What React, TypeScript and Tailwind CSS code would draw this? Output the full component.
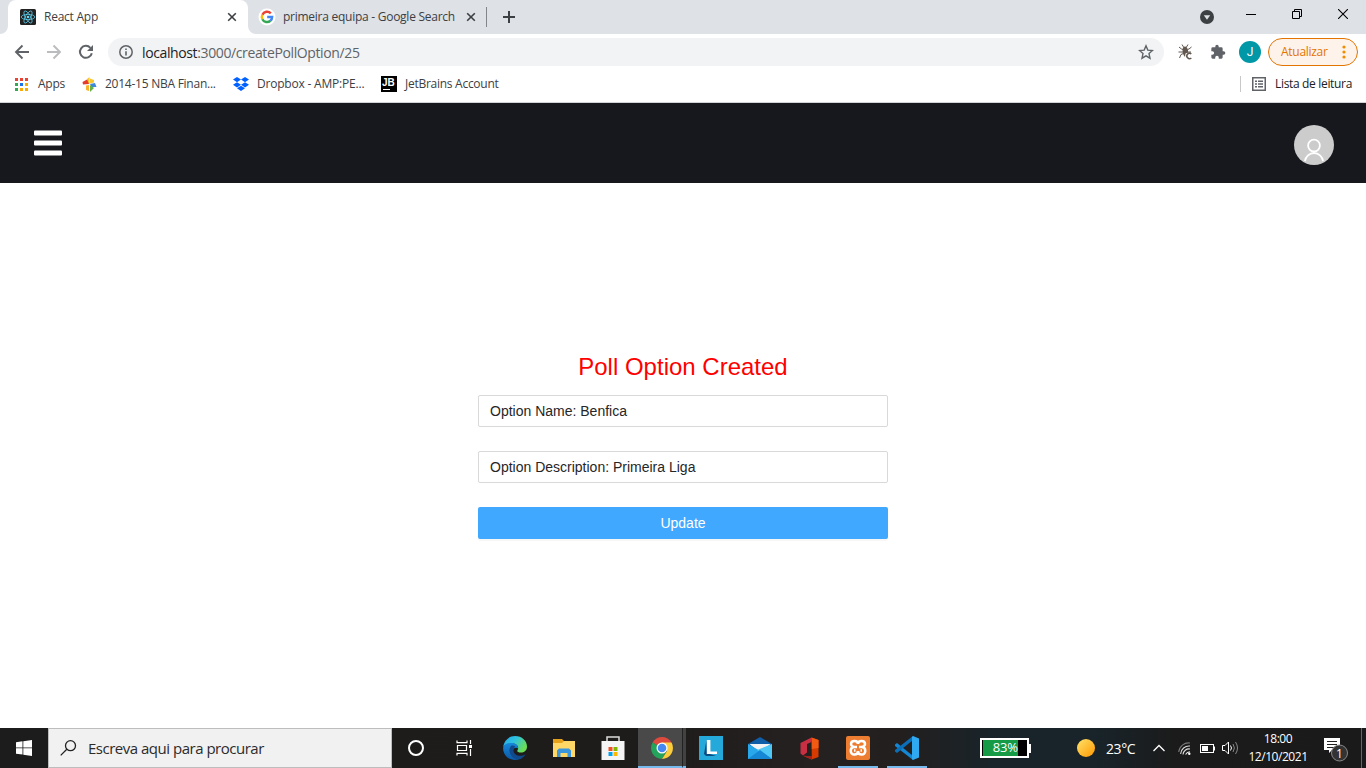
import type { ReactNode } from "react";

const ui = "font-['Open_Sans','Noto_Sans',sans-serif]";

function Cell({ className, children }: { className: string; children?: ReactNode }) {
  return <div className={`flex h-full shrink-0 items-center justify-center ${className}`}>{children}</div>;
}

function Label({ className, children }: { className: string; children?: ReactNode }) {
  return <div className={`shrink-0 whitespace-nowrap ${className}`}>{children}</div>;
}

function Close() {
  return (
    <svg className="block" width="10" height="10" viewBox="0 0 10 10" stroke="#3c4043" strokeWidth="1.6" fill="none">
      <path d="M1.2 1.2l7.600 7.600M8.800 1.200l-7.600 7.600" />
    </svg>
  );
}

function GoogleG() {
  return (
    <svg className="block" width="18" height="18" viewBox="0 0 18 18" fill="none" strokeWidth="2.5">
      <circle cx="9" cy="9" r="8.5" fill="#fff" />
      <path d="M12.8 5.4A5.1 5.1 0 0 0 4.4 6.8" stroke="#ea4335" />
      <path d="M4.4 6.7a5.1 5.1 0 0 0 0 4.6" stroke="#fbbc05" />
      <path d="M4.4 11.2a5.1 5.1 0 0 0 8 1.6" stroke="#34a853" />
      <path d="M12.3 12.9A5.1 5.1 0 0 0 14.1 9H9.2" stroke="#4285f4" />
    </svg>
  );
}

function ReactLogo() {
  return (
    <svg className="block" width="16" height="16" viewBox="0 0 16 16" fill="none" stroke="#61dafb" strokeWidth=".7">
      <rect width="16" height="16" rx="1.5" fill="#222" stroke="none" />
      <ellipse cx="8" cy="8" rx="6.8" ry="2.6" />
      <ellipse cx="8" cy="8" rx="6.8" ry="2.6" transform="rotate(60 8 8)" />
      <ellipse cx="8" cy="8" rx="6.8" ry="2.6" transform="rotate(120 8 8)" />
      <circle cx="8" cy="8" r="1.3" fill="#61dafb" stroke="none" />
    </svg>
  );
}

function TabStrip() {
  return (
    <div className="flex h-[34px] items-center bg-[#dee1e6] text-[12px] text-[#3c4043]">
      <svg className="block h-[34px] w-2 shrink-0" viewBox="0 0 8 34"><path d="M8 34V26a8 8 0 0 1-8 8z" fill="#fff" /></svg>
      <div className="flex h-full w-60 shrink-0 items-center rounded-t-lg bg-white pl-3">
        <ReactLogo />
        <Label className="ml-2 w-[181px] tracking-[-0.25px]">React App</Label>
        <Cell className="ml-[1px] w-3"><Close /></Cell>
      </div>
      <svg className="block h-[34px] w-2 shrink-0" viewBox="0 0 8 34"><path d="M0 34V26a8 8 0 0 0 8 8z" fill="#fff" /></svg>
      <Cell className="ml-[2px] w-[18px]"><GoogleG /></Cell>
      <Label className="ml-[7px] w-[182px] tracking-[-0.26px]">primeira equipa - Google Search</Label>
      <Cell className="w-3"><Close /></Cell>
      <div className="ml-[9px] h-5 w-px bg-[#80868b]" />
      <Cell className="ml-4 w-3">
        <svg className="block" width="12" height="12" viewBox="0 0 12 12" stroke="#3c4043" strokeWidth="2"><path d="M6 0v12M0 6h12" /></svg>
      </Cell>
      <div className="flex-1" />
      <Cell className="mr-8 w-[14px]">
        <svg className="block" width="14" height="14" viewBox="0 0 14 14"><circle cx="7" cy="7" r="7" fill="#3c4043" /><path d="M3.8 5.2h6.4L7 9.8z" fill="#dee1e6" /></svg>
      </Cell>
      <svg className="mb-[5px] mr-9 block" width="10" height="11" viewBox="0 0 10 11"><path d="M0 5.5h10" stroke="#000" /></svg>
      <svg className="mb-[6px] mr-9 block" width="10" height="10" viewBox="0 0 10 10" fill="none" stroke="#000"><path d="M.5 2.5h7v7h-7zM2.5 2.5v-2h7v7h-2" /></svg>
      <svg className="mb-[6px] mr-[18px] block" width="10" height="10" viewBox="0 0 10 10" stroke="#000" strokeWidth="1.1"><path d="M0 0l10 10M10 0L0 10" /></svg>
    </div>
  );
}

function Toolbar() {
  return (
    <div className="flex h-9 items-center bg-white text-[#5f6368]">
      <svg className="ml-[14px] block" width="16" height="16" viewBox="0 0 16 16" fill="none" stroke="#5f6368" strokeWidth="1.9"><path d="M15 8H2.5M8.5 1.5L2 8l6.5 6.5" /></svg>
      <svg className="ml-4 block" width="16" height="16" viewBox="0 0 16 16" fill="none" stroke="#babcbe" strokeWidth="1.9"><path d="M1 8h12.5M7.5 1.5L14 8l-6.5 6.5" /></svg>
      <svg className="ml-4 block" width="16" height="16" viewBox="0 0 16 16" fill="none" stroke="#5f6368" strokeWidth="2"><path d="M13.8 9.2A6 6 0 1 1 12.4 3.8" /><path d="M15 1v6H9z" fill="#5f6368" stroke="none" /></svg>
      <div className="ml-[14px] flex h-7 w-[1056px] items-center rounded-full bg-[#f1f3f4] pl-[11px]">
        <svg className="block" width="14" height="14" viewBox="0 0 14 14" fill="none" stroke="#5f6368" strokeWidth="1.5"><circle cx="7" cy="7" r="6.2" /><path d="M7 6.2v4.2M7 3.5v1.5" strokeWidth="1.6" /></svg>
        <Label className="ml-[9px] w-[996px] text-[14px] tracking-[-0.38px]"><span className="text-[#202124]">localhost</span>:3000/createPollOption/25</Label>
        <svg className="block" width="16" height="16" viewBox="0 0 16 16" fill="none" stroke="#5f6368" strokeWidth="1.4"><path d="M8 1.8l1.8 4.3 4.7.4L11 9.6l1 4.6-4-2.4-4 2.4 1-4.6-3.5-3.1 4.7-.4z" /></svg>
      </div>
      <svg className="ml-[14px] block" width="16" height="16" viewBox="0 0 16 16" fill="none" stroke="#62584f" strokeWidth="1">
        <path d="M4 .5l1.500 2.500M10 .5L8.500 3M1 3l2.500 2L5 5.500M13.500 3L11 5l-1.500.5M.5 8H5M1.500 14l1.500-3.500L5.500 9.500M9 8h4" />
        <path d="M5 3.500q2-2 4 0L10 6v2.500L7.500 9.500 7 13Q5.500 11.500 4.800 9L4.500 6z" fill="#62584f" stroke="none" />
        <path d="M13.300 9.800a2.700 2.700 0 1 0 0 4.200" strokeWidth="1.600" />
      </svg>
      <svg className="ml-4 block" width="16" height="16" viewBox="0 0 24 24" fill="#5f6368"><path d="M20.5 11H19V7a2 2 0 0 0-2-2h-4V3.500a2.500 2.500 0 0 0-5 0V5H4a2 2 0 0 0-2 2v3.800h1.500a2.700 2.700 0 0 1 0 5.400H2V20a2 2 0 0 0 2 2h3.800v-1.500a2.700 2.700 0 0 1 5.400 0V22H17a2 2 0 0 0 2-2v-4h1.500a2.500 2.500 0 0 0 0-5z" /></svg>
      <div className="ml-[13px] flex h-[22px] w-[22px] items-center justify-center rounded-full bg-[#0097a7] font-['Roboto',sans-serif] text-[12px] text-white">J</div>
      <div className="ml-[7px] flex h-7 w-[90px] items-center rounded-full border border-[#e37400] bg-[#fdf3ea] pl-3 text-[12px] text-[#e37400]">
        <Label className="w-[61px] tracking-[-0.28px]">Atualizar</Label>
        <svg className="block" width="4" height="14" viewBox="0 0 4 14" fill="#f08c00"><circle cx="2" cy="2" r="1.600" /><circle cx="2" cy="7" r="1.600" /><circle cx="2" cy="12" r="1.600" /></svg>
      </div>
    </div>
  );
}

function Bookmarks() {
  return (
    <div className="flex h-[33px] items-center border-b border-[#d0d2d5] bg-white pb-1 text-[12px] text-[#3c4043]">
      <svg className="ml-[15px] block" width="13" height="13" viewBox="0 0 13 13">
        <path d="M0 0h3v3H0zM5 0h3v3H5zM10 0h3v3h-3z" fill="#ea4335" />
        <path d="M0 5h3v3H0zM0 10h3v3H0z" fill="#34a853" />
        <path d="M5 5h3v3H5z" fill="#1a73e8" />
        <path d="M10 5h3v3h-3zM5 10h3v3H5zM10 10h3v3h-3z" fill="#f9ab00" />
      </svg>
      <Label className="ml-[10px] w-11 tracking-[-0.25px]">Apps</Label>
      <svg className="block" width="15" height="15" viewBox="0 0 15 15">
        <path d="M7.500 7V0l-2.500 2v4.500z" fill="#f9c62d" /><path d="M8 6.500V1.500l4 1.500v2.500z" fill="#f9c62d" /><path d="M7 7L1 7.500 .5 5 5 2.500z" fill="#e53b2c" /><path d="M8 7l5-1 1.500 4-5 0z" fill="#3f87d8" /><path d="M7 8v6l-3-1V8.500z" fill="#f7b32b" /><path d="M8 8l4 3-4 4z" fill="#62b146" />
      </svg>
      <Label className="ml-2 w-32 tracking-[-0.25px]">2014-15 NBA Finan...</Label>
      <svg className="block" width="16" height="14" viewBox="0 0 16 14" fill="#0061ff"><path d="M4 0l4 2.600-4 2.600-4-2.600zM12 0l4 2.600-4 2.600-4-2.600zM4 5.200l4 2.600-4 2.600-4-2.600zM12 5.200l4 2.600-4 2.600-4-2.600zM8 8.700l4 2.600-4 2.600-4-2.600z" /></svg>
      <Label className="ml-2 w-[124px] tracking-[-0.2px]">Dropbox - AMP:PE...</Label>
      <div className="flex h-4 w-4 shrink-0 flex-col bg-black pl-[1px] pt-[2px] font-['Liberation_Sans',sans-serif] text-[10px] font-bold leading-[9px] text-white">
        JB<span className="ml-[1px] mt-[2px] block h-px w-[7px] bg-white" />
      </div>
      <Label className="ml-2 tracking-[-0.27px]">JetBrains Account</Label>
      <div className="flex-1" />
      <div className="h-4 w-px bg-[#c6c8ca]" />
      <svg className="ml-[11px] block" width="14" height="14" viewBox="0 0 14 14" fill="none" stroke="#5f6368" strokeWidth="1.500"><rect x=".75" y=".75" width="12.500" height="12.500" /><path d="M3 4.200h2M6 4.200h5M3 7h2M6 7h5M3 9.800h2M6 9.800h5" /></svg>
      <Label className="ml-[9px] w-[91px] tracking-[-0.33px] text-[#202124]">Lista de leitura</Label>
    </div>
  );
}

function Page() {
  return (
    <>
      <header className="flex h-20 items-center justify-between bg-[#17181d] pl-[34px] pr-8">
        <svg className="block" width="28" height="26" viewBox="0 0 28 26" fill="#fff"><rect y="0.5" width="28" height="5" rx="1" /><rect y="10.500" width="28" height="5" rx="1" /><rect y="20.500" width="28" height="5" rx="1" /></svg>
        <svg className="mt-1 block" width="40" height="40" viewBox="0 0 40 40" fill="none" stroke="#fff" strokeWidth="1.800"><circle cx="20" cy="20" r="20" fill="#ccc" stroke="none" /><circle cx="20" cy="20.600" r="5.900" /><path d="M10.900 36.200a9.200 9.600 0 0 1 18.200 0" /></svg>
      </header>
      <main className="flex flex-1 justify-center bg-white pt-[165px] font-['Liberation_Sans',sans-serif]">
        <div className="flex w-[410px] flex-col">
          <h1 className="mb-[9px] text-center text-[24px] leading-[38px] text-[#ff0000]">Poll Option Created</h1>
          <div className="mb-6 flex h-8 items-center rounded-[2px] border border-[#d9d9d9] px-[11px] text-[14px] text-[#262626]">Option Name: Benfica</div>
          <div className="mb-6 flex h-8 items-center rounded-[2px] border border-[#d9d9d9] px-[11px] text-[14px] text-[#262626]">Option Description: Primeira Liga</div>
          <button className="h-8 rounded-[2px] bg-[#40a9ff] text-[14px] text-white shadow-[0_2px_0_rgba(0,0,0,0.03)]">Update</button>
        </div>
      </main>
    </>
  );
}

function EdgeIcon() {
  return (
    <svg className="block" width="24" height="24" viewBox="0 0 24 24">
      <defs>
        <linearGradient id="edgeTop" x1="0" y1="0" x2="1" y2=".5"><stop offset="0" stopColor="#24a5e8" /><stop offset=".5" stopColor="#2fc3df" /><stop offset="1" stopColor="#6bdd55" /></linearGradient>
        <linearGradient id="edgeLow" x1="0" y1="0" x2="0" y2="1"><stop offset="0" stopColor="#1688dc" /><stop offset="1" stopColor="#0c59a4" /></linearGradient>
      </defs>
      <path d="M.2 11C1 4.500 6 0 12 0c7 0 12 5 12 10.500 0 4-3 6-6 6-3 0-4.500-1-3.500-2.300C16.500 11 14 7.500 9 7.500 4 7.500 1 9.500.2 11z" fill="url(#edgeTop)" />
      <path d="M.1 12.500C0 9 4 7 8.500 7c4.500 0 7 3 6.500 5.500-2-2-6 0-5.500 4 .5 4.500 5.500 6.500 10 5C17.500 23 15 24 12 24 5 24 .3 18.500.1 12.500z" fill="url(#edgeLow)" />
      <path d="M8.500 9.500c-4 3.500-2 12 5.500 14 4 .2 7-2.500 8.500-5.200-5 3-12 1.500-12-4 0-2 1-3 2-3.500-1-1-2.500-1.500-4-1.300z" fill="#104a8c" />
    </svg>
  );
}

function ChromeIcon() {
  return (
    <svg className="block" width="22" height="22" viewBox="0 0 22 22">
      <path d="M11 11L1.500 5.500A11 11 0 0 1 20.500 5.500z" fill="#df4a3f" />
      <path d="M11 11L1.500 5.500A11 11 0 0 0 11 22l4.500-8z" fill="#24a35a" />
      <path d="M11 5.500h9.500A11 11 0 0 1 11 22l5-8z" fill="#fbcd3b" />
      <circle cx="11" cy="11" r="5.500" fill="#fff" /><circle cx="11" cy="11" r="4.300" fill="#4688f1" />
    </svg>
  );
}

function Tray() {
  return (
    <>
      <div className="ml-[53px] flex items-center">
        <div className="flex h-5 w-[49px] items-stretch border-2 border-white bg-black text-[13px] text-white">
          <div className="ml-px flex w-[35px] items-center justify-end whitespace-nowrap bg-[#159a46] tracking-[-0.1px]">83%</div>
        </div>
        <div className="h-[9px] w-[2px] bg-white" />
      </div>
      <svg className="ml-[46px] block" width="18" height="18" viewBox="0 0 18 18"><defs><linearGradient id="sun" x1="0" y1="0" x2="1" y2="1"><stop stopColor="#ffe36a" /><stop offset="1" stopColor="#ff9800" /></linearGradient></defs><circle cx="9" cy="9" r="9" fill="url(#sun)" /></svg>
      <Label className="ml-[11px] w-[47px] text-[14px] tracking-[-0.4px]">23°C</Label>
      <svg className="block" width="12" height="8" viewBox="0 0 12 8" fill="none" stroke="#fff" strokeWidth="1.300"><path d="M.5 7L6 1.500 11.500 7" /></svg>
      <svg className="ml-[13px] mt-px block" width="13" height="13" viewBox="0 0 13 13" fill="none" strokeWidth="1.100"><path d="M.7 10A10 10 0 0 1 12 1" stroke="#777" /><path d="M2.600 12A8.500 8.500 0 0 1 12 4M5 12.500A6 6 0 0 1 12 7M7.600 12.500Q9 10 12 9.800" stroke="#ddd" /><circle cx="11.300" cy="11.700" r="1.200" fill="#fff" /></svg>
      <svg className="ml-[9px] block" width="16" height="9" viewBox="0 0 16 9" fill="none" stroke="#fff"><rect x=".5" y=".5" width="13" height="8" /><path d="M2 2h6v5H2z" fill="#fff" stroke="none" /><path d="M14.500 2.500v4" /></svg>
      <svg className="ml-[6px] block" width="17" height="14" viewBox="0 0 17 14" fill="none" stroke="#fff"><path d="M.5 4.500H3L6.500 1v12L3 9.500H.5zM8.500 4.500q2 2.500 0 5" /><path d="M11 3q2.800 4 0 8M13.500 1q4 6 0 12" stroke="#888" /></svg>
      <div className="ml-[6px] flex w-[66px] flex-col items-center whitespace-nowrap text-[12px] leading-[18px] tracking-[-0.45px]"><span>18:00</span><span>12/10/2021</span></div>
      <svg className="ml-[13px] mt-1 block" width="26" height="26" viewBox="0 0 26 26">
        <path d="M0 1h16v12H8l-3 3v-3H0z" fill="#fff" /><path d="M3 4.500h10M3 7.500h10M3 10.500h7" stroke="#222" />
        <circle cx="15.500" cy="16" r="8" fill="#333" stroke="#888" /><text x="15.500" y="20.500" textAnchor="middle" fontSize="12" fontFamily="Open Sans" fill="#fff">1</text>
      </svg>
      <div className="ml-[11px] h-full w-px bg-[#666]" />
    </>
  );
}

function Taskbar() {
  return (
    <footer className="flex h-10 items-center bg-[linear-gradient(90deg,#1c1c1c_0,#1e1c1b_48%,#252120_60%,#231f1f_66%,#18242a_73%,#18242a_80%,#1b1b1b_86%,#1a1a1a_100%)] text-white">
      <Cell className="w-12"><svg className="block" width="16" height="16" viewBox="0 0 16 16" fill="#fff"><path d="M0 2.200L6.500 1.300V7.500H0zM7.300 1.200L16 0v7.500H7.300zM0 8.300h6.500v6.200L0 13.700zM7.300 8.300H16V16l-8.700-1.300z" /></svg></Cell>
      <div className="flex h-full w-[344px] shrink-0 items-center border border-[#bdbdbd] bg-[#f1f1f1] pl-[11px] text-[#2b2b2b]">
        <svg className="block" width="17" height="16" viewBox="0 0 17 16" fill="none" stroke="#222" strokeWidth="1.300"><circle cx="10.500" cy="5.700" r="5" /><path d="M6.800 9.300L.7 15.400" /></svg>
        <Label className="ml-[11px] text-[15px] tracking-[-0.49px]">Escreva aqui para procurar</Label>
      </div>
      <Cell className="w-12"><div className="h-4 w-4 rounded-full border-2 border-white" /></Cell>
      <Cell className="w-12"><svg className="block" width="17" height="16" viewBox="0 0 17 16" fill="none" stroke="#fff" strokeWidth="1.200"><path d="M1 .5v2.200h10V.5M1 15.500v-2.200h10v2.200M1.500 5.500h9v5h-9zM14.500 0v4M14.500 9v7" /><path d="M13 5h3v3h-3z" fill="#fff" stroke="none" /></svg></Cell>
      <Cell className="ml-[2px] w-[50px]"><EdgeIcon /></Cell>
      <Cell className="w-12"><svg className="block" width="22" height="19" viewBox="0 0 22 19"><path d="M0 0h9l2 2H22v16H0z" fill="#e5a01c" /><path d="M0 4h9l2-2h11v16H0z" fill="#ffd766" /><path d="M4 18v-6.500l2-2h10l2 2V18h-3.500v-4h-7v4z" fill="#3a96dd" /></svg></Cell>
      <Cell className="w-[50px]"><svg className="block" width="24" height="24" viewBox="0 0 24 24"><path d="M6 7V1h12v6" fill="none" stroke="#ddd" strokeWidth="1.500" /><path d="M.5 5h23v19H.5z" fill="#f5f5f5" /><path d="M7.500 11h4v4h-4z" fill="#f25022" /><path d="M12.500 11h4v4h-4z" fill="#7fba00" /><path d="M7.500 16h4v4h-4z" fill="#00a4ef" /><path d="M12.500 16h4v4h-4z" fill="#ffb900" /></svg></Cell>
      <Cell className="w-11 border-b-2 border-[#76b9ed] bg-[#494949] pl-1 pt-[2px]"><ChromeIcon /></Cell>
      <div className="h-full w-1 shrink-0 border-b-2 border-l border-b-[#76b9ed] border-l-[#222] bg-[#424242]" />
      <Cell className="w-[50px]"><svg className="block" width="24" height="24" viewBox="0 0 24 24"><path d="M0 0h24v24H0z" fill="#25a9da" /><path d="M7.500 4l-2.500 14 2 2H17l-9-3z" fill="#0c4a82" /><path d="M7.800 4h3.600v11.500H18V18H7.800z" fill="#fff" /></svg></Cell>
      <Cell className="w-12"><svg className="block" width="24" height="22" viewBox="0 0 24 22"><path d="M0 7L12 0l12 7v3H0z" fill="#105da8" /><path d="M1.500 7h21L12 16z" fill="#f3f3f3" /><path d="M0 7l14 8 10 7H0z" fill="#28a8ea" /><path d="M24 7v15L9 13z" fill="#50c8f5" /><path d="M0 22l12-9 12 9z" fill="#1687d4" /></svg></Cell>
      <Cell className="w-[50px]"><svg className="block" width="19" height="23" viewBox="0 0 19 23"><path d="M.5 6L11.500.5V5L7 7v8.500L3 18.500l-2.500-2z" fill="#c92f43" /><path d="M11.500.5L18.500 3v17l-7 2.500L3.500 19l8.300.5z" fill="#d83b01" /><path d="M11.500.5L18.500 3v8l-6.700 1V5z" fill="#f05a12" /><path d="M3 18.500l9 1v3.200z" fill="#a02020" /></svg></Cell>
      <Cell className="ml-1 w-10 border-b-2 border-[#76b9ed] pt-[2px]"><svg className="block" width="24" height="24" viewBox="0 0 24 24" fill="none" stroke="#fff" strokeWidth="2.500"><rect width="24" height="24" rx="2" fill="#ed7d31" stroke="none" /><path d="M12 8c0-4-7-4-7 0 0 2 2 3 3.500 3H11M8.500 11C3 11.500 4 19 8.500 18.500 11 18.500 12 17 12 15c0 2 1 3.500 3.500 3.500 4.500.5 5.500-7 0-7.500H13M15.500 11C17 11 19 10 19 8c0-4-7-4-7 0M8 14.500h1.500M14.500 14.500H16" /></svg></Cell>
      <Cell className="ml-[9px] w-10 border-b-2 border-[#76b9ed] pt-[2px]"><svg className="block" width="24" height="24" viewBox="0 0 24 24"><path d="M0 8.500L2 7l16 13v4L0 10z" fill="#1487d4" /><path d="M0 15.500L2 17 18 4V0L0 14z" fill="#0b6fb8" /><path d="M18 0l6 2.500v19L18 24l-1-1V1z" fill="#2ea9f2" /></svg></Cell>
      <Tray />
    </footer>
  );
}

export default function App() {
  return (
    <div className={`flex h-screen w-full flex-col overflow-hidden ${ui}`}>
      <TabStrip />
      <Toolbar />
      <Bookmarks />
      <Page />
      <Taskbar />
    </div>
  );
}
